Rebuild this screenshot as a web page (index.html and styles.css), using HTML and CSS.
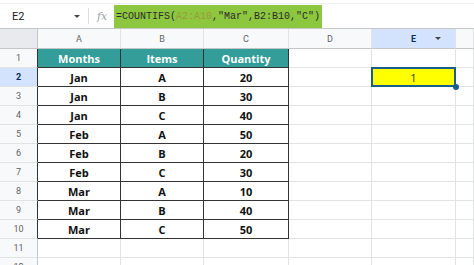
FILE: index.html
```html
<!DOCTYPE html>
<html lang="en">
<head>
    <meta charset="UTF-8">
    <title>COUNTIFS</title>
    <link rel="stylesheet" href="styles.css">
</head>
<body>
    <div class="strip"></div>
    <!-- Formula bar -->
    <div class="formula-bar">
        <div class="name-box">
            <span>E2</span>
            <span class="caret"></span>
        </div>
        <div class="sep"></div>
        <div class="fx">fx</div>
        <div class="formula">=COUNTIFS(<span class="range">A2:A10</span>,"Mar",B2:B10,"C")</div>
    </div>

    <!-- Sheet grid -->
    <div class="sheet">
        <div class="corner"></div>
        <div class="col-head">A</div>
        <div class="col-head">B</div>
        <div class="col-head">C</div>
        <div class="col-head">D</div>
        <div class="col-head active">E<span class="caret"></span></div>
        <div class="col-head"></div>

        <div class="row-head edge">1</div>
        <div class="cell t th">Months</div>
        <div class="cell t th">Items</div>
        <div class="cell t th">Quantity</div>
        <div class="cell"></div><div class="cell"></div><div class="cell"></div>

        <div class="row-head edge active">2</div>
        <div class="cell t">Jan</div><div class="cell t">A</div><div class="cell t">20</div>
        <div class="cell"></div><div class="cell sel">1</div><div class="cell"></div>

        <div class="row-head edge">3</div>
        <div class="cell t">Jan</div><div class="cell t">B</div><div class="cell t">30</div>
        <div class="cell"></div><div class="cell"></div><div class="cell"></div>

        <div class="row-head edge">4</div>
        <div class="cell t">Jan</div><div class="cell t">C</div><div class="cell t">40</div>
        <div class="cell"></div><div class="cell"></div><div class="cell"></div>

        <div class="row-head edge">5</div>
        <div class="cell t">Feb</div><div class="cell t">A</div><div class="cell t">50</div>
        <div class="cell"></div><div class="cell"></div><div class="cell"></div>

        <div class="row-head edge">6</div>
        <div class="cell t">Feb</div><div class="cell t">B</div><div class="cell t">20</div>
        <div class="cell"></div><div class="cell"></div><div class="cell"></div>

        <div class="row-head edge">7</div>
        <div class="cell t">Feb</div><div class="cell t">C</div><div class="cell t">30</div>
        <div class="cell"></div><div class="cell"></div><div class="cell"></div>

        <div class="row-head edge">8</div>
        <div class="cell t">Mar</div><div class="cell t">A</div><div class="cell t">10</div>
        <div class="cell"></div><div class="cell"></div><div class="cell"></div>

        <div class="row-head edge">9</div>
        <div class="cell t">Mar</div><div class="cell t">B</div><div class="cell t">40</div>
        <div class="cell"></div><div class="cell"></div><div class="cell"></div>

        <div class="row-head edge">10</div>
        <div class="cell t">Mar</div><div class="cell t">C</div><div class="cell t">50</div>
        <div class="cell"></div><div class="cell"></div><div class="cell"></div>

        <div class="row-head">11</div>
        <div class="cell"></div><div class="cell"></div><div class="cell"></div>
        <div class="cell"></div><div class="cell"></div><div class="cell"></div>

        <div class="row-head">12</div>
        <div class="cell"></div><div class="cell"></div><div class="cell"></div>
        <div class="cell"></div><div class="cell"></div><div class="cell"></div>
    </div>
</body>
</html>
```

FILE: styles.css
```css
/* Reset */
* {
    box-sizing: border-box;
    margin: 0;
    padding: 0;
}

body {
    font-family: 'Roboto', 'Liberation Sans', sans-serif;
    background-color: #fff;
    color: #202124;
    width: 474px;
    height: 265px;
    overflow: hidden;
}

.strip {
    height: 4px;
    border-bottom: 1px solid #eceef0;
}

/* Formula bar */
.formula-bar {
    display: flex;
    align-items: center;
    height: 25px;
    border-bottom: 1px solid #c4c7c5;
}

.name-box {
    display: flex;
    align-items: center;
    justify-content: space-between;
    width: 80px;
    padding-left: 12px;
    font-size: 11px;
}

.caret {
    width: 0;
    height: 0;
    border-left: 3px solid transparent;
    border-right: 3px solid transparent;
    border-top: 3px solid #444;
}

.sep {
    width: 1px;
    height: 16px;
    background-color: #dadce0;
    margin-left: 8px;
}

.fx {
    font-family: 'DejaVu Serif', serif;
    font-style: italic;
    font-size: 11px;
    color: #9aa0a6;
    margin-left: 8px;
    width: 17px;
}

.formula {
    background-color: #8dc63f;
    height: 23px;
    line-height: 23px;
    width: 208px;
    padding-left: 2px;
    font-family: 'Liberation Mono', monospace;
    font-size: 10px;
    color: #2b2b2b;
    white-space: nowrap;
}

.formula .range {
    color: #9c9a3a;
}

/* Sheet */
.sheet {
    display: grid;
    grid-template-columns: 38px 83px 83px 85px 83px 84px 18px;
    grid-template-rows: 20px;
    grid-auto-rows: 19px;
}

.sheet > div {
    display: flex;
    align-items: center;
    justify-content: center;
    border-right: 1px solid #e2e3e3;
    border-bottom: 1px solid #e2e3e3;
}

.corner {
    background-color: #e8eaed;
    border-right-color: #c4c7c5 !important;
    border-bottom-color: #c4c7c5 !important;
}

.col-head {
    background-color: #f8f9fa;
    font-size: 9px;
    color: #5f6368;
    border-bottom-color: #c4c7c5 !important;
}

.row-head {
    background-color: #f8f9fa;
    font-size: 9px;
    color: #5f6368;
    border-right-color: #c4c7c5 !important;
}

.row-head.edge {
    border-right-color: #333 !important;
}

.col-head.active,
.row-head.active {
    background-color: #d3e3fd;
    color: #0b2a5b;
    font-weight: bold;
}

.col-head.active {
    position: relative;
}

.col-head.active .caret {
    position: absolute;
    right: 14px;
    top: 8px;
}

/* Data table */
.cell.t {
    font-family: 'Open Sans', sans-serif;
    font-weight: bold;
    font-size: 11px;
    color: #111;
    border-right-color: #333;
    border-bottom-color: #333;
}

.cell.th {
    background-color: #329d99;
    color: #fff;
}

/* Selected cell */
.cell.sel {
    position: relative;
    background-color: #ffff00;
    font-family: 'Open Sans', sans-serif;
    font-size: 11px;
    color: #333;
}

.cell.sel::before {
    content: '';
    position: absolute;
    left: -1px;
    top: -1px;
    right: -1px;
    bottom: -1px;
    border: 2px solid #1b5c8e;
}

.cell.sel::after {
    content: '';
    position: absolute;
    right: -4px;
    bottom: -4px;
    width: 6px;
    height: 6px;
    border-radius: 50%;
    background-color: #1b5c8e;
}
```
